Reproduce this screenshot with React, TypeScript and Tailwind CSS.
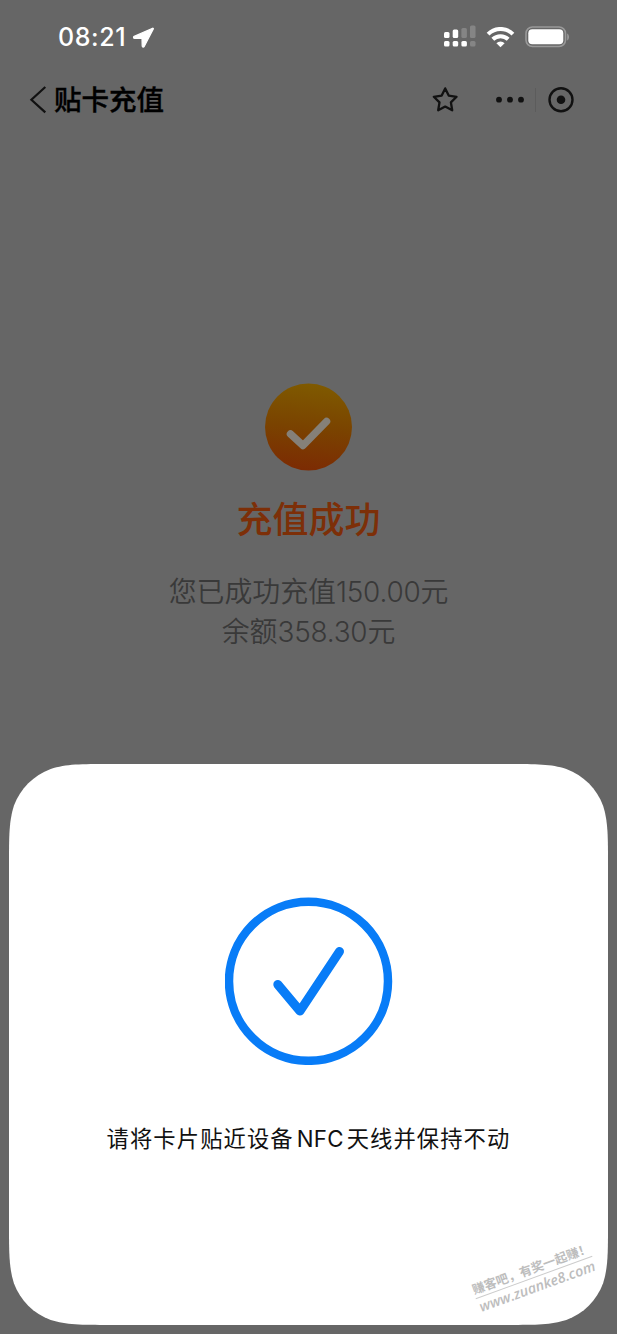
import React from "react";

function StatusBar() {
  return (
    <header className="flex h-[74px] items-center pl-[58px] pr-[47px] text-white">
      <span className="w-[73px] whitespace-nowrap text-[25px] leading-[30px] font-medium tracking-[0.6px]">08:21</span>
      <svg className="ml-[1px] h-[21px] w-[22px]" viewBox="0 0 22 21" fill="white" stroke="white" strokeWidth="1.2" strokeLinejoin="round">
        <path d="M20.6 1.200 2.200 9.400c-1 .5-.8 1.900.4 1.900l7.400.2.2 7.500c0 1.200 1.400 1.500 2 .4L21.300 2c.2-.5-.2-1-.7-.8Z" />
      </svg>
      <div className="ml-auto flex items-center">
        <svg className="h-[24px] w-[34px]" viewBox="0 0 34 24" fill="white">
          <rect x="1" y="7" width="5.5" height="6" rx="1.5" />
          <rect x="9.7" y="4.5" width="5.5" height="8.5" rx="1.5" />
          <rect x="18.4" y="3" width="5.5" height="10" rx="1.5" fill="#858585" />
          <rect x="27" y="0.5" width="5.5" height="12.5" rx="1.5" fill="#858585" />
          <rect x="1" y="16" width="5.5" height="5.5" rx="1.5" />
          <rect x="9.7" y="16" width="5.5" height="5.5" rx="1.5" />
          <rect x="18.4" y="16" width="5.5" height="5.5" rx="1.5" />
          <rect x="27" y="16" width="5.5" height="5.5" rx="1.5" fill="#858585" />
        </svg>
        <svg className="ml-[9px] h-[21px] w-[29px]" viewBox="0 0 29 21" fill="none" stroke="white" strokeWidth="4">
          <path d="M2.1 7.1a17.5 17.5 0 0 1 24.8 0" />
          <path d="M6.8 12.3a11 11 0 0 1 15.4 0" />
          <path d="M14.5 20.2 10.4 16.2a5.8 5.8 0 0 1 8.2 0Z" fill="white" stroke="none" />
        </svg>
        <svg className="ml-[10px] h-[22px] w-[45px]" viewBox="0 0 45 22">
          <rect x="1" y="1" width="39.5" height="19.500" rx="6.500" fill="none" stroke="#999" strokeWidth="1.6" />
          <rect x="3.3" y="3.3" width="35" height="15" rx="4" fill="white" />
          <path d="M42.2 7.5c2.4 1.2 2.4 5.8 0 7Z" fill="#999" />
        </svg>
      </div>
    </header>
  );
}

function NavBar() {
  return (
    <nav className="flex h-[52px] items-center pl-[29px] pr-[42px] text-black">
      <svg className="h-[30px] w-[19px]" viewBox="0 0 19 30" fill="none" stroke="#111" strokeWidth="2.2">
        <path d="M16.3 2 2.400 14.700 16.300 27.400" />
      </svg>
      <h1 className="ml-[6px] text-[27.5px] leading-[40px] font-medium [-webkit-text-stroke:0.35px_black]">贴卡充值</h1>
      <svg className="ml-auto h-[28px] w-[28px]" viewBox="0 0 28 28" fill="none" stroke="#111" strokeWidth="2.3" strokeLinejoin="round">
        <path d="m14.200 2.400 3.500 7.200 7.900 1.200-5.700 5.600 1.300 7.900-7-3.700-7 3.700 1.300-7.900-5.700-5.600 7.900-1.200Z" />
      </svg>
      <svg className="ml-[36px] h-[8px] w-[30px]" viewBox="0 0 30 8" fill="#111">
        <circle cx="4" cy="3.7" r="2.9" />
        <circle cx="15" cy="3.7" r="2.9" />
        <circle cx="26" cy="3.7" r="2.9" />
      </svg>
      <div className="ml-[10px] h-[24px] w-px bg-[#5c5c5c]" />
      <svg className="ml-[11px] h-[28px] w-[28px]" viewBox="0 0 28 28">
        <circle cx="14" cy="13.700" r="11.500" fill="none" stroke="#111" strokeWidth="2.400" />
        <circle cx="14" cy="13.700" r="4.300" fill="#111" />
      </svg>
    </nav>
  );
}

function Result() {
  return (
    <main className="flex h-[638px] flex-col items-center pt-[257px]">
      <svg className="h-[88px] w-[88px]" viewBox="0 0 88 88">
        <defs>
          <linearGradient id="badge" x1="0.55" y1="0" x2="0.45" y2="1">
            <stop offset="0" stopColor="#7f5a00" />
            <stop offset="0.5" stopColor="#7a4300" />
            <stop offset="1" stopColor="#7c2b03" />
          </linearGradient>
        </defs>
        <circle cx="43.500" cy="44" r="43.500" fill="url(#badge)" />
        <path d="M25.500 51 38 62.500 61.500 38.500" fill="none" stroke="#858078" strokeWidth="7.500" strokeLinecap="round" strokeLinejoin="round" />
      </svg>
      <h2 className="mt-[23px] text-[36px] leading-[52px] font-medium text-[#7d2f08]">充值成功</h2>
      <p className="mt-[26px] text-center text-[27.900px] leading-[40px] font-[350] whitespace-nowrap text-[#393939]">
        您已成功充值<span className="font-light tracking-[-0.2px]">150.00</span>元
        <br />
        余额<span className="font-light tracking-[-0.2px]">358.30</span>元
      </p>
    </main>
  );
}

function Watermark() {
  return (
    <div className="absolute top-[496px] left-[463px] w-[124px] -rotate-[20deg] text-center whitespace-nowrap text-[#bdbdbd]">
      <div className="border-b border-[#cccccc] text-[12.500px] leading-[17px] font-bold">赚客吧，有奖一起赚！</div>
      <div className="font-['Open_Sans',sans-serif] text-[14.300px] leading-[17px] font-semibold italic">www.zuanke8.com</div>
    </div>
  );
}

function NfcSheet() {
  return (
    <section className="relative mx-[9px] flex h-[561px] flex-col items-center bg-white pt-[133px] [clip-path:path('M101_0C71.8_0_57.3_0_41.7_4.9C24.6_11.2_11.2_24.6_4.9_41.7C0_57.3_0_71.8_0_101V460C0_489.200_0_503.700_4.9_519.300C11.2_536.400_24.6_549.800_41.7_556.100C57.3_561_71.8_561_101_561H498C527.200_561_541.700_561_557.300_556.100C574.400_549.800_587.800_536.400_594.100_519.300C599_503.700_599_489.200_599_460V101C599_71.800_599_57.300_594.100_41.700C587.800_24.600_574.400_11.200_557.300_4.900C541.700_0_527.200_0_498_0Z')]">
      <svg className="h-[168px] w-[168px]" viewBox="0 0 168 168" fill="none" stroke="#087cf7">
        <circle cx="83.500" cy="84.300" r="79.500" strokeWidth="8.500" />
        <path d="M52.800 87.500 75 114 114.500 54.500" strokeWidth="9" strokeLinecap="round" strokeLinejoin="round" />
      </svg>
      <p className="mt-[56px] text-[22.300px] leading-[36px] tracking-[1.1px] whitespace-nowrap text-[#111]">
        请将卡片贴近设备<span className="mx-[3px] tracking-[0.2px]">NFC</span>天线并保持不动
      </p>
      <Watermark />
    </section>
  );
}

export default function App() {
  return (
    <div className="h-[1334px] w-[617px] overflow-hidden bg-[#666666] font-['Inter','Noto_Sans_CJK_SC',sans-serif]">
      <StatusBar />
      <NavBar />
      <Result />
      <NfcSheet />
    </div>
  );
}
